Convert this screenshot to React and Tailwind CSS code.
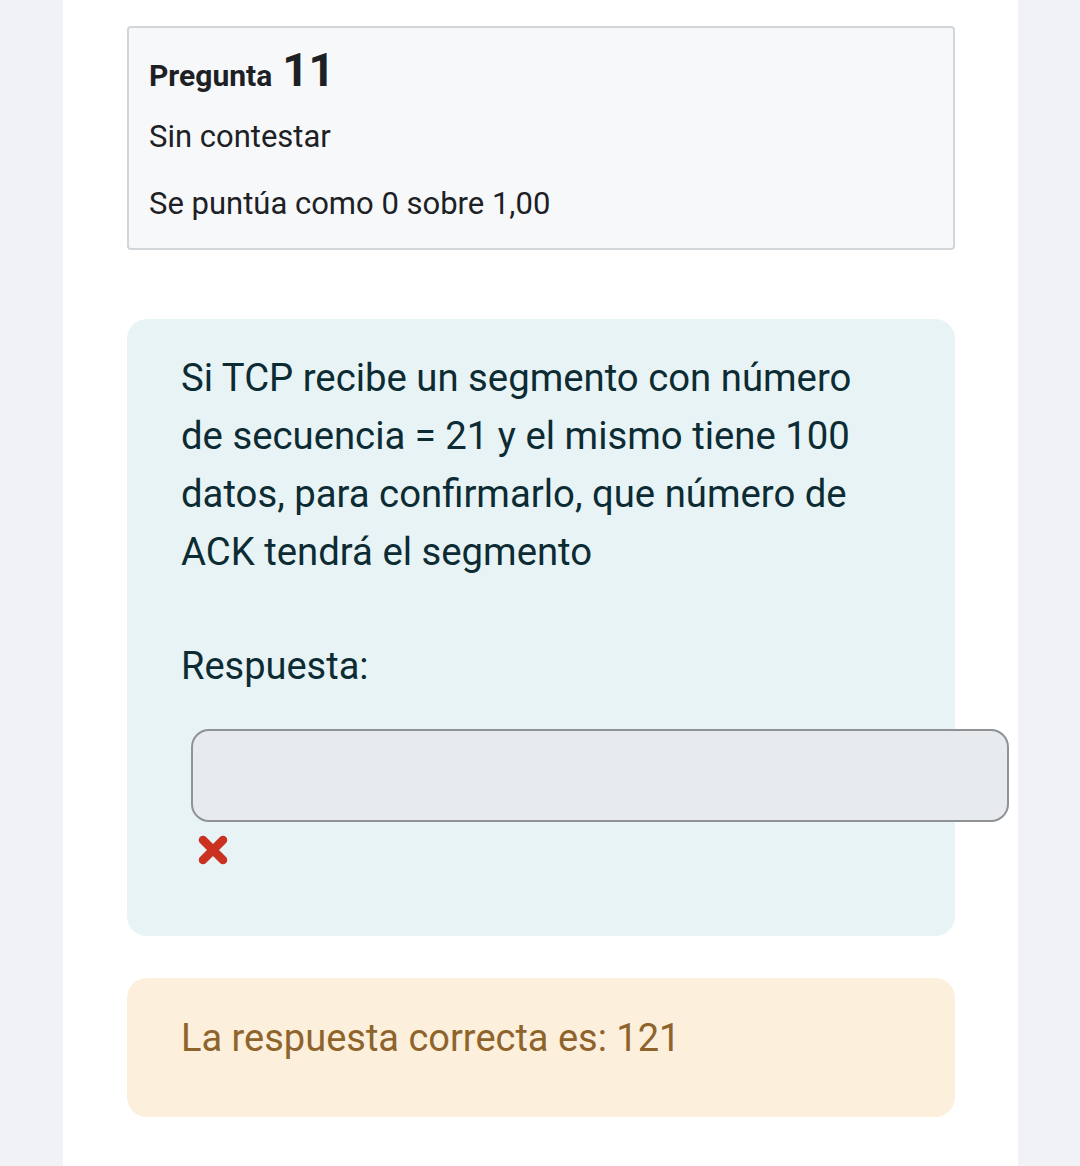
export default function App() {
  return (
    <div className="min-h-[1166px] w-[1080px] bg-[#f1f2f6] font-['Roboto',sans-serif]">
      <div className="ml-[63px] w-[955px] min-h-[1166px] bg-white pl-[64px] pr-[63px] pt-[26px] pb-[50px]">
        {/* Info box */}
        <div className="w-[828px] rounded-[4px] border-2 border-[#d3d6d9] bg-[#f7f8fa] px-[20px] pt-[19px] pb-[26px] text-[#1d2125]">
          <h3 className="flex items-baseline gap-[10px] leading-none">
            <span className="text-[30px] font-bold">Pregunta</span>
            <span className="text-[46px] font-bold">11</span>
          </h3>
          <div className="mt-[26px] text-[31px] leading-[36px]">Sin contestar</div>
          <div className="mt-[31px] text-[31px] leading-[36px]">Se puntúa como 0 sobre 1,00</div>
        </div>

        {/* Question */}
        <div className="mt-[69px] w-[828px] rounded-[20px] bg-[#e7f3f5] pl-[54px] pt-[30px] pb-[70px] text-[#0c2b33]">
          <p className="w-[700px] text-[38.3px] leading-[58px]">
            Si TCP recibe un segmento con número de secuencia = 21 y el mismo tiene 100 datos, para confirmarlo, que número de ACK tendrá el segmento
          </p>
          <div className="mt-[56px] text-[38px] leading-[58px]">Respuesta:</div>
          <div className="mt-[34px] ml-[10px] h-[93px] w-[818px] rounded-[18px] border-2 border-[#8f9396] bg-[#e8ebee]" />
          <div className="mt-[12px] ml-[15px] h-[32px] w-[34px]">
            <svg viewBox="0 0 34 32" className="h-[32px] w-[34px]">
              <path d="M7 6 L27 26 M27 6 L7 26" stroke="#ca3120" strokeWidth="8.5" strokeLinecap="round" fill="none" />
            </svg>
          </div>
        </div>

        {/* Feedback */}
        <div className="mt-[42px] w-[828px] rounded-[20px] bg-[#fcefdc] pl-[54px] pt-[34px] pb-[53px] text-[#8e642c]">
          <div className="text-[38px] leading-[52px]">La respuesta correcta es: 121</div>
        </div>
      </div>
    </div>
  );
}
